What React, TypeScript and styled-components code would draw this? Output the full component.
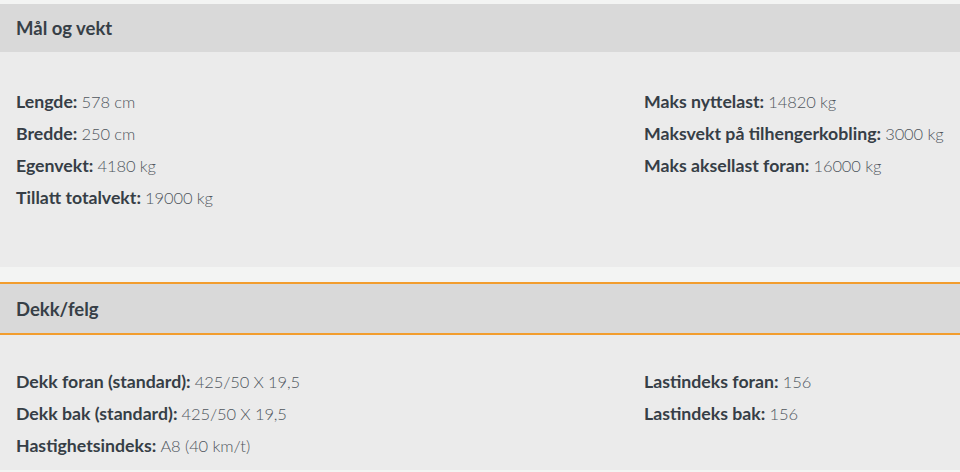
import React from 'react';
import styled, { createGlobalStyle } from 'styled-components';

const GlobalStyle = createGlobalStyle`
  body {
    margin: 0;
    background: #f3f4f3;
    font-family: Lato, 'Open Sans', sans-serif;
  }
`;

const Page = styled.div`
  padding-top: 4px;
`;

const Section = styled.section`
  & + & {
    margin-top: 15px;
  }
`;

const Header = styled.h2<{ accent?: boolean }>`
  margin: 0;
  height: ${(props) => (props.accent ? '49px' : '48px')};
  display: flex;
  align-items: center;
  padding: 0 16px;
  background: #d9d9d9;
  color: #373f47;
  font-size: 18.5px;
  font-weight: 700;
  border-top: ${(props) => (props.accent ? '2px solid #f29d2e' : 'none')};
  border-bottom: ${(props) => (props.accent ? '2px solid #f29d2e' : 'none')};
`;

const Body = styled.div<{ top: number; bottom: number }>`
  background: #ebebeb;
  padding: ${(props) => `${props.top}px 16px ${props.bottom}px`};
  display: grid;
  grid-template-columns: 628px 1fr;
`;

const Column = styled.ul`
  list-style: none;
  margin: 0;
  padding: 0;
`;

const Row = styled.li`
  line-height: 32px;
  white-space: nowrap;
`;

const Label = styled.strong`
  color: #363e46;
  font-size: 17.7px;
  font-weight: 700;
`;

const Value = styled.span`
  color: #4f565d;
  font-size: 16.5px;
  font-weight: 300;
  letter-spacing: -0.1px;
`;

type Spec = [string, string];

const sections: {
  title: string;
  accent?: boolean;
  top: number;
  bottom: number;
  left: Spec[];
  right: Spec[];
}[] = [
  {
    title: 'Mål og vekt',
    top: 34,
    bottom: 53,
    left: [
      ['Lengde', '578 cm'],
      ['Bredde', '250 cm'],
      ['Egenvekt', '4180 kg'],
      ['Tillatt totalvekt', '19000 kg'],
    ],
    right: [
      ['Maks nyttelast', '14820 kg'],
      ['Maksvekt på tilhengerkobling', '3000 kg'],
      ['Maks aksellast foran', '16000 kg'],
    ],
  },
  {
    title: 'Dekk/felg',
    accent: true,
    top: 31,
    bottom: 8,
    left: [
      ['Dekk foran (standard)', '425/50 X 19,5'],
      ['Dekk bak (standard)', '425/50 X 19,5'],
      ['Hastighetsindeks', 'A8 (40 km/t)'],
    ],
    right: [
      ['Lastindeks foran', '156'],
      ['Lastindeks bak', '156'],
    ],
  },
];

function SpecList({ items }: { items: Spec[] }) {
  return (
    <Column>
      {items.map(([label, value]) => (
        <Row key={label}>
          <Label>{label}:</Label> <Value>{value}</Value>
        </Row>
      ))}
    </Column>
  );
}

function App() {
  return (
    <Page>
      <GlobalStyle />
      {sections.map((section) => (
        <Section key={section.title}>
          <Header accent={section.accent}>{section.title}</Header>
          <Body top={section.top} bottom={section.bottom}>
            <SpecList items={section.left} />
            <SpecList items={section.right} />
          </Body>
        </Section>
      ))}
    </Page>
  );
}

export default App;
